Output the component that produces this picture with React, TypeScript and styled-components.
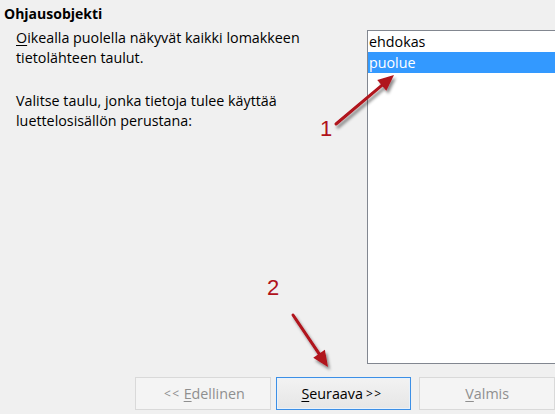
import React from "react";
import styled, { createGlobalStyle } from "styled-components";

const Global = createGlobalStyle`
  html, body { margin: 0; padding: 0; background: #f0f0f0; }
  body { font-family: "Open Sans", "Noto Sans", "DejaVu Sans", sans-serif; }
`;

const Page = styled.div`
  position: relative;
  width: 555px;
  height: 414px;
  overflow: hidden;
  background: #f0f0f0;
  color: #000;
  display: flex;
  flex-direction: column;
  font-size: 14.3px;
`;

const Title = styled.div`
  font-weight: 700;
  font-size: 14px;
  line-height: 20px;
  padding: 4px 0 0 4px;
`;

const Body = styled.div`
  display: flex;
`;

const TextCol = styled.div`
  width: 367px;
  padding: 4px 0 0 16px;
  box-sizing: border-box;
  flex-shrink: 0;
`;

const Para = styled.p<{ $gap?: number }>`
  margin: ${(p) => p.$gap ?? 0}px 0 0 0;
  line-height: 20px;
  width: 300px;
`;

const Mnemonic = styled.span`
  text-decoration: underline;
  text-decoration-thickness: 1px;
  text-underline-offset: 2px;
`;

const ListBox = styled.div`
  margin-top: 6px;
  width: 200px;
  height: 334px;
  box-sizing: border-box;
  border: 1px solid #828790;
  background: #fff;
  flex-shrink: 0;
`;

const ListItem = styled.div<{ $selected?: boolean }>`
  height: 21px;
  line-height: 21px;
  padding-left: 1px;
  background: ${(p) => (p.$selected ? "#3399ff" : "transparent")};
  color: ${(p) => (p.$selected ? "#fff" : "#000")};
`;

const Footer = styled.div`
  display: flex;
  padding-left: 135px;
  margin-top: 13px;
`;

const Button = styled.div<{ $primary?: boolean; $disabled?: boolean; $ml?: number }>`
  width: 136px;
  height: 33px;
  box-sizing: border-box;
  margin-left: ${(p) => p.$ml ?? 0}px;
  display: flex;
  align-items: center;
  justify-content: center;
  font-size: 14.3px;
  border: 1px solid ${(p) => (p.$primary ? "#3c8fe6" : "#d9d9d9")};
  background: ${(p) =>
    p.$primary ? "linear-gradient(#f2f2f2, #e6e6e6)" : "#f4f4f4"};
  box-shadow: ${(p) => (p.$primary ? "inset 0 0 0 1px #e9f2fb" : "none")};
  color: ${(p) => (p.$disabled ? "#8f8f8f" : "#000")};
`;

const Chevrons = styled.span`
  font-size: 12px;
  letter-spacing: 1.5px;
  margin: 0 3px;
`;

const Arrows = styled.svg`
  position: absolute;
  left: 0;
  top: 0;
  width: 555px;
  height: 414px;
  pointer-events: none;
`;

const Label = styled.span<{ $x: number; $y: number }>`
  position: absolute;
  left: ${(p) => p.$x}px;
  top: ${(p) => p.$y}px;
  font-family: "Liberation Sans", Arial, sans-serif;
  font-size: 22px;
  line-height: 22px;
  color: #b0121b;
`;

function Arrow({ x1, y1, x2, y2 }: { x1: number; y1: number; x2: number; y2: number }) {
  const dx = x2 - x1;
  const dy = y2 - y1;
  const len = Math.hypot(dx, dy);
  const ux = dx / len;
  const uy = dy / len;
  const hl = 16;
  const hw = 7;
  const bx = x2 - ux * hl;
  const by = y2 - uy * hl;
  const px = -uy * hw;
  const py = ux * hw;
  const head = `${x2},${y2} ${bx + px},${by + py} ${bx - px},${by - py}`;
  return (
    <g filter="url(#sh)">
      <line x1={x1} y1={y1} x2={bx + ux * 2} y2={by + uy * 2} stroke="#b0121b" strokeWidth={3} strokeLinecap="round" />
      <polygon points={head} fill="#b0121b" />
    </g>
  );
}

export default function App() {
  return (
    <Page>
      <Global />
      <Title>Ohjausobjekti</Title>
      <Body>
        <TextCol>
          <Para>
            <Mnemonic>O</Mnemonic>ikealla puolella näkyvät kaikki lomakkeen tietolähteen taulut.
          </Para>
          <Para $gap={23}>Valitse taulu, jonka tietoja tulee käyttää luettelosisällön perustana:</Para>
        </TextCol>
        <ListBox>
          <ListItem>ehdokas</ListItem>
          <ListItem $selected>puolue</ListItem>
        </ListBox>
      </Body>
      <Footer>
        <Button $disabled>
          <Chevrons>&lt;&lt;</Chevrons>
          <Mnemonic>E</Mnemonic>dellinen
        </Button>
        <Button $primary $ml={5}>
          <Mnemonic>S</Mnemonic>euraava
          <Chevrons>&gt;&gt;</Chevrons>
        </Button>
        <Button $disabled $ml={8}>
          <Mnemonic>V</Mnemonic>almis
        </Button>
      </Footer>
      <Arrows viewBox="0 0 555 414">
        <defs>
          <filter id="sh" x="-50%" y="-50%" width="200%" height="200%">
            <feDropShadow dx="2" dy="3" stdDeviation="1.6" floodColor="#000" floodOpacity="0.45" />
          </filter>
        </defs>
        <Arrow x1={336} y1={124} x2={394} y2={75} />
        <Arrow x1={293} y1={315} x2={328} y2={367} />
      </Arrows>
      <Label $x={320} $y={118}>1</Label>
      <Label $x={267} $y={277}>2</Label>
    </Page>
  );
}
